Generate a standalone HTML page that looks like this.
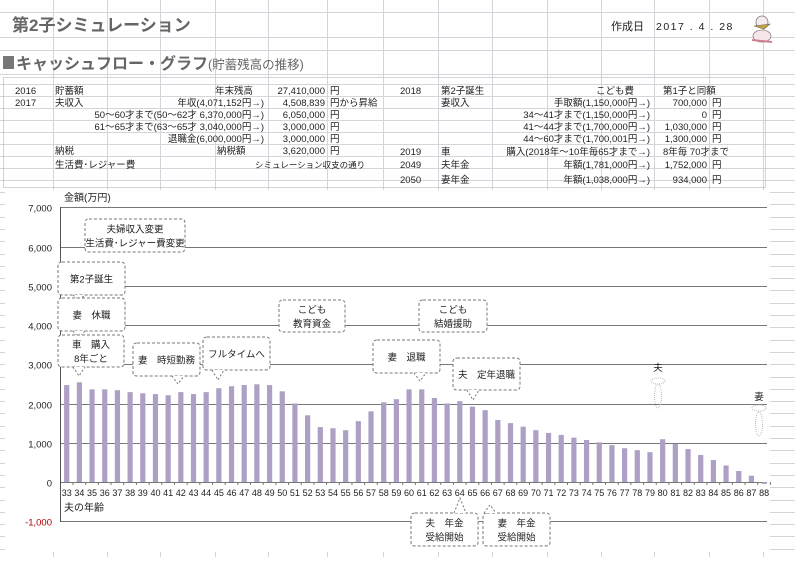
<!DOCTYPE html>
<html><head><meta charset="utf-8">
<style>
html,body{margin:0;padding:0;background:#fff;}
body{width:795px;height:557px;overflow:hidden;position:relative;font-family:"Liberation Sans","Noto Sans CJK JP",sans-serif;}
svg text{font-family:"Liberation Sans","Noto Sans CJK JP",sans-serif;}
</style></head><body>
<svg id="s" width="795" height="557" viewBox="0 0 795 557" xmlns="http://www.w3.org/2000/svg">
<g stroke="#d4d4dc" stroke-width="1" id="grid"></g>
<text x="12" y="31" font-size="17" font-weight="bold" fill="#666">第2子シミュレーション</text>
<text x="611" y="30" font-size="11" fill="#222">作成日</text>
<text x="656" y="30" font-size="10.5" fill="#222" letter-spacing="1.5">2017 . 4 . 28</text>
<g transform="translate(748,12)">
<ellipse cx="14" cy="10" rx="6" ry="6" fill="#f4ecec" stroke="#777" stroke-width="0.8"/>
<path d="M6 14 L22 12 L16 17 Z" fill="#c8a040" stroke="#665" stroke-width="0.6"/>
<ellipse cx="14" cy="24" rx="9" ry="6" fill="#f6e6ea" stroke="#888" stroke-width="0.8"/>
<path d="M4 28 L24 30" stroke="#d08090" stroke-width="2"/>
</g>
<rect x="3" y="56" width="11" height="13" fill="#777"/>
<text x="16" y="69" font-size="16" font-weight="bold" fill="#666">キャッシュフロー・グラフ<tspan font-size="12.5" font-weight="normal">(貯蓄残高の推移)</tspan></text>
<rect x="3.5" y="77.5" width="762" height="110" fill="none" stroke="#aaa" stroke-dasharray="1,1"/>
<g font-size="9.5" fill="#222">
<text x="15" y="94">2016</text><text x="55" y="94">貯蓄額</text><text x="253" y="94" text-anchor="end">年末残高</text><text x="325" y="94" text-anchor="end">27,410,000</text><text x="330" y="94">円</text>
<text x="15" y="106">2017</text><text x="55" y="106">夫収入</text><text x="264" y="106" text-anchor="end">年収(4,071,152円→)</text><text x="325" y="106" text-anchor="end">4,508,839</text><text x="330" y="106">円から昇給</text>
<text x="264" y="118" text-anchor="end">50～60才まで(50～62才 6,370,000円→)</text><text x="325" y="118" text-anchor="end">6,050,000</text><text x="330" y="118">円</text>
<text x="264" y="130" text-anchor="end">61～65才まで(63～65才 3,040,000円→)</text><text x="325" y="130" text-anchor="end">3,000,000</text><text x="330" y="130">円</text>
<text x="264" y="142" text-anchor="end">退職金(6,000,000円→)</text><text x="325" y="142" text-anchor="end">3,000,000</text><text x="330" y="142">円</text>
<text x="55" y="154">納税</text><text x="217" y="154">納税額</text><text x="325" y="154" text-anchor="end">3,620,000</text><text x="330" y="154">円</text>
<text x="55" y="168">生活費･レジャー費</text><text x="255" y="168" font-size="8.5">シミュレーション収支の通り</text>
<text x="400" y="94">2018</text><text x="441" y="94">第2子誕生</text><text x="634" y="94" text-anchor="end">こども費</text><text x="663" y="94">第1子と同額</text>
<text x="441" y="106">妻収入</text><text x="650" y="106" text-anchor="end">手取額(1,150,000円→)</text><text x="707" y="106" text-anchor="end">700,000</text><text x="712" y="106">円</text>
<text x="650" y="118" text-anchor="end">34～41才まで(1,150,000円→)</text><text x="707" y="118" text-anchor="end">0</text><text x="712" y="118">円</text>
<text x="650" y="130" text-anchor="end">41～44才まで(1,700,000円→)</text><text x="707" y="130" text-anchor="end">1,030,000</text><text x="712" y="130">円</text>
<text x="650" y="142" text-anchor="end">44～60才まで(1,700,001円→)</text><text x="707" y="142" text-anchor="end">1,300,000</text><text x="712" y="142">円</text>
<text x="400" y="155">2019</text><text x="441" y="155">車</text><text x="650" y="155" text-anchor="end">購入(2018年～10年毎65才まで→)</text><text x="663" y="155">8年毎 70才まで</text>
<text x="400" y="168">2049</text><text x="441" y="168">夫年金</text><text x="650" y="168" text-anchor="end">年額(1,781,000円→)</text><text x="707" y="168" text-anchor="end">1,752,000</text><text x="712" y="168">円</text>
<text x="400" y="183">2050</text><text x="441" y="183">妻年金</text><text x="650" y="183" text-anchor="end">年額(1,038,000円→)</text><text x="707" y="183" text-anchor="end">934,000</text><text x="712" y="183">円</text>
</g>
<rect x="5" y="190" width="765" height="362" fill="#fff"/>
<g id="chart"></g>
</svg>
<script>
var NS="http://www.w3.org/2000/svg";
function el(p,t,a,txt){var e=document.createElementNS(NS,t);for(var k in a)e.setAttribute(k,a[k]);if(txt!=null)e.textContent=txt;p.appendChild(e);return e;}
var g=document.getElementById('grid');
var cols=[53,107,160,215,268,327,383,438,492,547,601,654,709,763];
cols.forEach(function(x){el(g,'line',{x1:x+.5,y1:0,x2:x+.5,y2:557});});
var rows=[12,37,50,74,84,96,108,120,132,144,156,168,180];
for(var y=192;y<557;y+=12.3)rows.push(Math.round(y));
rows.forEach(function(y){el(g,'line',{x1:0,y1:y+.5,x2:795,y2:y+.5});});
var c=document.getElementById('chart');
var y0=482,k=39.25,L=60,R=767;
el(c,'text',{x:64,y:201,'font-size':10,fill:'#222'},'金額(万円)');
for(var v=7;v>=-1;v--){var yy=Math.round(y0-v*k)+.5;
 el(c,'line',{x1:L,y1:yy,x2:R,y2:yy,stroke:'#777','stroke-width':1});
 el(c,'text',{x:52,y:yy+4,'font-size':9.5,'text-anchor':'end',fill:v<0?'#a00':'#222'},v==0?'0':(v<0?'-1,000':v+',000'));}
el(c,'line',{x1:L+.5,y1:207,x2:L+.5,y2:522,stroke:'#555'});
var vals=[2.47,2.54,2.36,2.36,2.34,2.29,2.26,2.24,2.21,2.29,2.24,2.29,2.39,2.44,2.47,2.49,2.47,2.31,2.0,1.70,1.40,1.37,1.32,1.55,1.80,2.03,2.11,2.36,2.36,2.14,2.0,2.06,1.92,1.83,1.58,1.5,1.41,1.32,1.25,1.2,1.13,1.07,1.01,0.94,0.86,0.81,0.76,1.09,0.97,0.84,0.69,0.56,0.42,0.28,0.16,-0.05];
vals.forEach(function(v,i){var cx=66.7+i*12.68;var h=v*k;
 el(c,'rect',{x:cx-2.6,y:h>0?y0-h:y0,width:5.2,height:Math.abs(h)||1,fill:'#aea0c4'});
 el(c,'line',{x1:cx+6.3,y1:y0,x2:cx+6.3,y2:y0+3,stroke:'#777'});
 el(c,'text',{x:cx,y:y0+14,'font-size':9,'text-anchor':'middle',fill:'#222'},String(33+i));});
el(c,'text',{x:64,y:511,'font-size':10,fill:'#222'},'夫の年齢');
function box(x,y,w,h,lines,px,py){
 el(c,'path',{d:'M'+(x+4)+' '+y+' H'+(x+w-4)+' Q'+(x+w)+' '+y+' '+(x+w)+' '+(y+4)+' V'+(y+h-4)+' Q'+(x+w)+' '+(y+h)+' '+(x+w-4)+' '+(y+h)+' H'+(x+4)+' Q'+x+' '+(y+h)+' '+x+' '+(y+h-4)+' V'+(y+4)+' Q'+x+' '+y+' '+(x+4)+' '+y+' Z',fill:'#fff',stroke:'#777','stroke-dasharray':'3,2','stroke-width':1});
 if(px!=null){el(c,'path',{d:'M'+(px-6)+' '+(py>y?y+h:y)+' L'+px+' '+py+' L'+(px+6)+' '+(py>y?y+h:y),fill:'#fff',stroke:'#777','stroke-dasharray':'2,2'});}
 var n=lines.length;lines.forEach(function(t,j){el(c,'text',{x:x+w/2,y:y+h/2+4+(j-(n-1)/2)*14,'font-size':9.5,'text-anchor':'middle',fill:'#222'},t);});}
box(85,219,100,33,['夫婦収入変更','生活費･レジャー費変更']);
box(58,262,67,33,['第2子誕生'],79,300);
box(58,298,67,33,['妻　休職'],79,338);
box(58,335,66,32,['車　購入','8年ごと'],79,376);
box(133,343,67,33,['妻　時短勤務'],178,384);
box(203,337,67,33,['フルタイムへ'],218,380);
box(279,300,66,32,['こども','教育資金']);
box(373,340,67,33,['妻　退職'],420,381);
box(419,300,68,32,['こども','結婚援助']);
box(453,358,67,32,['夫　定年退職'],473,400);
box(411,513,67,33,['夫　年金','受給開始'],460,498);
box(483,513,67,33,['妻　年金','受給開始'],490,505);
el(c,'text',{x:658,y:371,'font-size':9.5,'text-anchor':'middle',fill:'#222'},'夫');
el(c,'ellipse',{cx:658,cy:381,rx:7,ry:3,fill:'none',stroke:'#bbb','stroke-dasharray':'1,1'});
el(c,'ellipse',{cx:658,cy:396,rx:3.5,ry:12,fill:'none',stroke:'#bbb','stroke-dasharray':'1,1'});
el(c,'text',{x:759,y:400,'font-size':9.5,'text-anchor':'middle',fill:'#222'},'妻');
el(c,'ellipse',{cx:759,cy:408,rx:7,ry:3,fill:'none',stroke:'#bbb','stroke-dasharray':'1,1'});
el(c,'ellipse',{cx:759,cy:424,rx:3.5,ry:12,fill:'none',stroke:'#bbb','stroke-dasharray':'1,1'});
</script>
</body></html>
